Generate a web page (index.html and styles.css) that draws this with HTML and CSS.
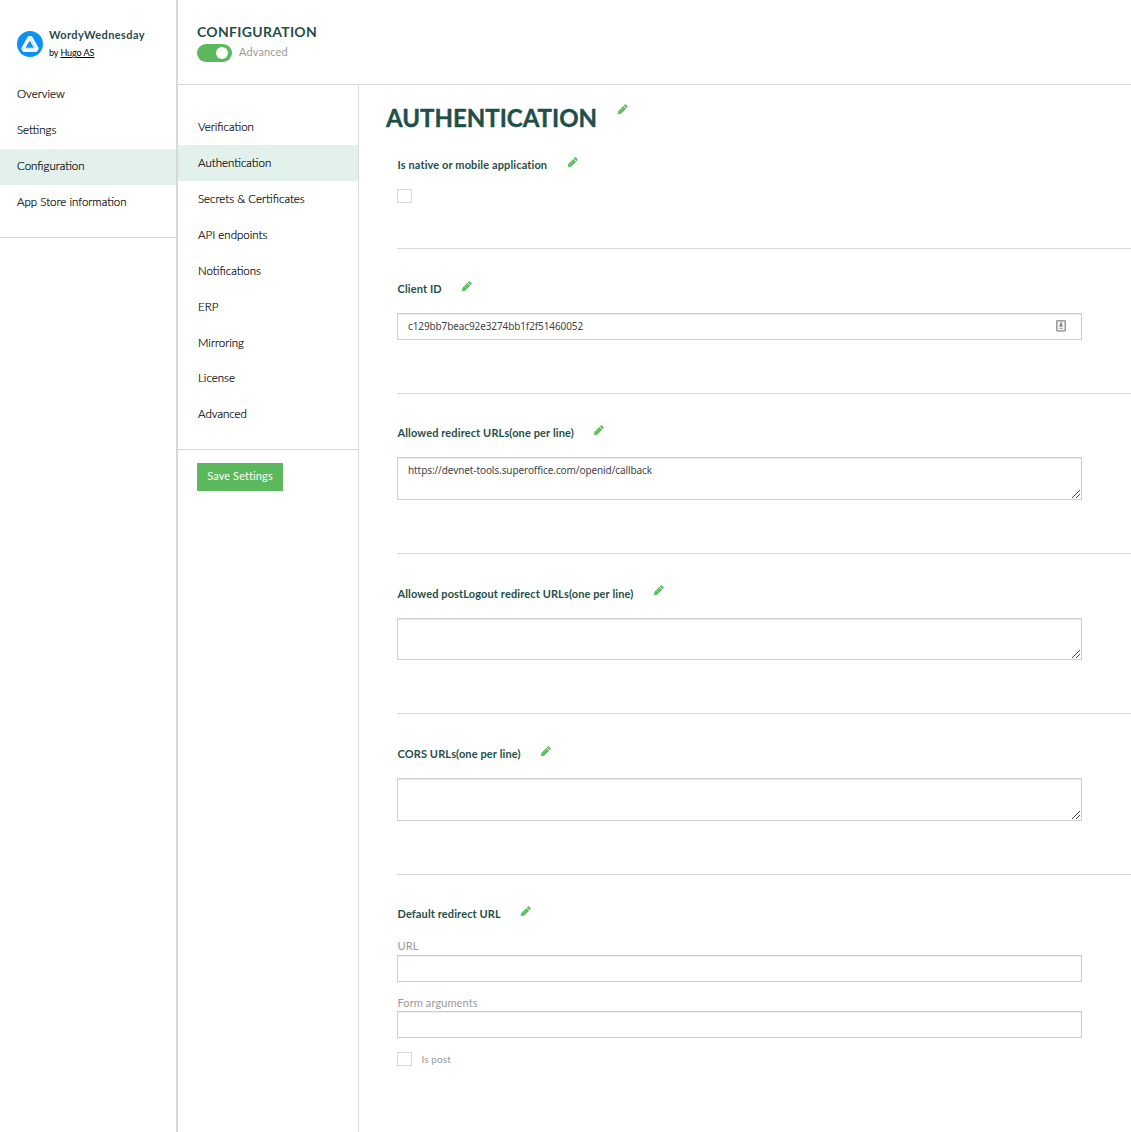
FILE: index.html
```html
<!DOCTYPE html>
<html lang="en">
<head>
<meta charset="utf-8">
<title>WordyWednesday - Configuration</title>
<link rel="stylesheet" href="styles.css">
</head>
<body>
<svg class="sprite" aria-hidden="true">
  <symbol id="pencil" viewBox="0 0 12 12">
    <path fill="#5cb85c" d="M.8 11.2 1.4 7.6 6.9 2.1 9.9 5.1 4.4 10.6ZM7.5 1.5 8.5.6Q9.1.1 9.7.6L11.4 2.3Q11.9 2.9 11.4 3.5L10.5 4.5Z"/>
    <path fill="none" stroke="#fff" stroke-opacity=".7" stroke-width=".5" d="M3 8.2 7.1 4.1M1.5 9 3 10.5"/>
  </symbol>
</svg>
<div class="app">
  <aside class="sidebar">
    <div class="brand">
      <svg class="logo" viewBox="0 0 26 26"><circle cx="13" cy="13" r="13" fill="#0a93f5"/><path d="M11.2 5.6h3.6L21.4 17.4l-1.8 3H6.2l-1.6-2.8Z" fill="#fff" stroke="#fff" stroke-width=".8" stroke-linejoin="round"/><path d="M12.7 9.4 16.9 16.8H8.5Z" fill="#0a93f5"/><path d="M13.2 7.2 19 17.6M4.6 17.9H17.6" stroke="#0a93f5" stroke-width=".3" fill="none"/></svg>
      <div class="brand-text">
        <div class="brand-name">WordyWednesday</div>
        <div class="brand-owner">by <a href="#">Hugo AS</a></div>
      </div>
    </div>
    <nav class="menu primary">
      <a href="#">Overview</a>
      <a href="#">Settings</a>
      <a href="#" class="active">Configuration</a>
      <a href="#">App Store information</a>
    </nav>
  </aside>
  <div class="main">
    <header class="topbar">
      <h2>CONFIGURATION</h2>
      <div class="mode"><span class="toggle"></span><span class="mode-label">Advanced</span></div>
    </header>
    <div class="body">
      <div class="subnav">
        <nav class="menu sections">
          <a href="#">Verification</a>
          <a href="#" class="active">Authentication</a>
          <a href="#">Secrets &amp; Certificates</a>
          <a href="#">API endpoints</a>
          <a href="#">Notifications</a>
          <a href="#">ERP</a>
          <a href="#" class="mirroring">Mirroring</a>
          <a href="#">License</a>
          <a href="#">Advanced</a>
        </nav>
        <button class="save" type="button">Save Settings</button>
      </div>
      <main class="content">
        <div class="title"><h1>AUTHENTICATION</h1><svg class="pencil"><use href="#pencil"/></svg></div>
        <section class="field native">
          <div class="label"><span>Is native or mobile application</span><svg class="pencil"><use href="#pencil"/></svg></div>
          <span class="check"></span>
        </section>
        <section class="field client">
          <div class="label"><span>Client ID</span><svg class="pencil"><use href="#pencil"/></svg></div>
          <div class="input"><span>c129bb7beac92e3274bb1f2f51460052</span>
            <svg class="card" viewBox="0 0 10 12"><rect x=".75" y=".75" width="8.5" height="10.2" rx=".6" fill="#f4f4f4" stroke="#999" stroke-width="1.5"/><path fill="#777" d="M4.2 2.5h1.6v2L7 6.5H3l1.2-2Z"/><path fill="#aaa" d="M3 7.8h4v1H3z"/></svg>
          </div>
        </section>
        <section class="field redirect">
          <div class="label"><span>Allowed redirect URLs(one per line)</span><svg class="pencil"><use href="#pencil"/></svg></div>
          <div class="area"><span>https://devnet-tools.superoffice.com/openid/callback</span><svg class="grip" viewBox="0 0 9 9"><path d="M.5 8.5l8-8M4.5 8.5l4-4"/></svg></div>
        </section>
        <section class="field logout">
          <div class="label"><span>Allowed postLogout redirect URLs(one per line)</span><svg class="pencil"><use href="#pencil"/></svg></div>
          <div class="area short"><svg class="grip" viewBox="0 0 9 9"><path d="M.5 8.5l8-8M4.5 8.5l4-4"/></svg></div>
        </section>
        <section class="field cors">
          <div class="label"><span>CORS URLs(one per line)</span><svg class="pencil"><use href="#pencil"/></svg></div>
          <div class="area"><svg class="grip" viewBox="0 0 9 9"><path d="M.5 8.5l8-8M4.5 8.5l4-4"/></svg></div>
        </section>
        <section class="field default">
          <div class="label"><span>Default redirect URL</span><svg class="pencil"><use href="#pencil"/></svg></div>
          <div class="sub">URL</div>
          <div class="input"></div>
          <div class="sub second">Form arguments</div>
          <div class="input"></div>
          <div class="post"><span class="check"></span><span>Is post</span></div>
        </section>
      </main>
    </div>
  </div>
</div>
</body>
</html>
```
FILE: styles.css
```css
* { box-sizing: border-box; }
body { margin: 0; background: #fff; color: #000; font: 11px/16px Lato, "Open Sans", sans-serif; overflow: hidden; }
a { color: inherit; text-decoration: none; }
h1, h2 { margin: 0; color: #1f4f4a; font-weight: 700; }
.sprite { position: absolute; width: 0; height: 0; }
.app { display: flex; height: 1132px; }
.sidebar { width: 178px; flex: none; border-right: 2px solid #d8d8d8; }
.brand { display: flex; height: 77px; padding: 27px 0 0 17px; gap: 6px; }
.logo { width: 26px; height: 26px; margin-top: 4px; flex: none; }
.brand-name { font-weight: 700; font-size: 11px; letter-spacing: .4px; color: #2a4a47; white-space: nowrap; }
.brand-owner { font-size: 9px; line-height: 18px; margin-top: 1px; letter-spacing: -.08px; }
.brand-owner a { text-decoration: underline; }
.menu { display: flex; flex-direction: column; padding-bottom: 16px; border-bottom: 1px solid #d8d8d8; }
.menu a { height: 36px; padding-left: 17px; line-height: 35px; font-size: 11.5px; font-weight: 300; white-space: nowrap; -webkit-text-stroke: .2px #000; }
.primary a { line-height: 34px; }
.menu .active { background: #e3f1ec; }
.main { flex: 1; min-width: 0; display: flex; flex-direction: column; }
.topbar { height: 85px; padding: 22px 19px 0; border-bottom: 1px solid #d8d8d8; }
.topbar h2 { font-size: 14px; line-height: 20px; letter-spacing: .3px; }
.mode { display: flex; align-items: center; height: 18px; margin-top: 2px; gap: 7px; }
.toggle { display: flex; justify-content: flex-end; width: 35px; height: 18px; padding: 3px; border-radius: 9px; background: #5cb85c; }
.toggle::after { content: ""; width: 12px; height: 12px; margin-right: 1px; border-radius: 50%; background: #fff; }
.mode-label { color: #999; line-height: 16px; margin-top: -2px; letter-spacing: .13px; }
.body { flex: 1; display: flex; min-height: 0; }
.subnav { width: 181px; flex: none; border-right: 1px solid #d8d8d8; }
.sections { padding-top: 24px; padding-bottom: 17px; }
.sections a { padding-left: 20px; }
.sections .mirroring { height: 35px; }
.save { display: block; width: 86px; height: 28px; margin: 13px 0 0 19px; padding: 0 0 2px; border: 0; background: #5cb85c; color: #fff; font: 11px/26px Lato, sans-serif; letter-spacing: .1px; white-space: nowrap; }
.content { flex: 1; min-width: 0; padding-left: 38px; }
.title { display: flex; height: 65px; margin-left: -11px; padding-top: 18px; }
.title h1 { width: 231px; font-size: 24px; line-height: 30px; white-space: nowrap; -webkit-text-stroke: .4px #1f4f4a; }
.pencil { width: 11px; height: 11px; flex: none; }
.title .pencil { margin-top: 1px; }
.field { border-bottom: 1px solid #d8d8d8; padding-top: 30px; }
.label { display: flex; gap: 19.5px; height: 20px; margin-bottom: 14px; padding-left: .5px; color: #1f4f4a; font-weight: 700; line-height: 20px; letter-spacing: .12px; white-space: nowrap; }
.label .pencil { margin-top: 2px; }
.native { height: 99px; padding-top: 5px; }
.check { display: block; width: 15px; height: 14px; border: 1px solid #d8d8d8; }
.client { height: 145px; }
.redirect { height: 160px; padding-top: 29px; }
.logout { height: 160px; }
.logout .pencil { margin-top: 1px; }
.cors { height: 161px; }
.default { border: 0; padding-top: 29px; }
.input, .area { display: flex; justify-content: space-between; width: 685px; border: 1px solid #ccced2; box-shadow: inset 0 1px 1px rgba(0,0,0,.075); color: #444; font: 10px/24px "Noto Sans", sans-serif; letter-spacing: -.11px; padding-left: 10px; }
.input { height: 27px; }
.area { height: 43px; line-height: 25px; letter-spacing: -.09px; }
.short { height: 42px; }
.card { width: 10px; height: 12px; margin: 6px 15px 0 0; }
.grip { width: 9px; height: 9px; margin: auto 1px 0 auto; fill: none; stroke: #444; stroke-width: 1; shape-rendering: crispEdges; }
.sub { height: 17px; padding-left: .5px; color: #999; line-height: 16px; letter-spacing: .1px; }
.second { height: 16px; margin-top: 13px; }
.post { display: flex; gap: 9.5px; margin-top: 14px; color: #999; font-size: 10px; line-height: 14px; letter-spacing: .1px; }
```
